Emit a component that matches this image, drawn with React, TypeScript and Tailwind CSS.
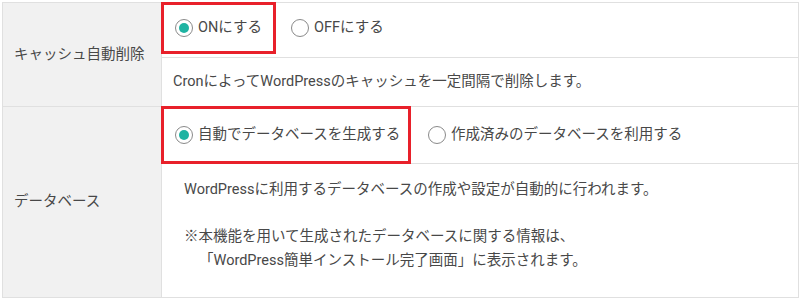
import type { ReactNode } from "react";

function Radio({ checked, label }: { checked?: boolean; label: string }) {
  return (
    <span className="flex items-center gap-[5px]">
      <span className="flex h-[18px] w-[18px] shrink-0 items-center justify-center rounded-full border-[1.5px] border-[#8a8a8a] bg-white">
        {checked && <span className="h-[10px] w-[10px] rounded-full bg-[#1fb3a2]" />}
      </span>
      <span className="whitespace-nowrap">{label}</span>
    </span>
  );
}

function Row({ label, last, children }: { label: string; last?: boolean; children: ReactNode }) {
  return (
    <div className={last ? "flex" : "flex border-b border-[#e0e0e0]"}>
      <div className="flex w-[159px] shrink-0 items-center border-r border-[#e0e0e0] bg-[#f1f1f1] pl-[11px]">
        {label}
      </div>
      <div className="flex flex-1 flex-col">{children}</div>
    </div>
  );
}

export default function App() {
  return (
    <div className="h-[301px] w-[800px] bg-white pl-[2px] pt-[2px] font-['Roboto','Noto_Sans_CJK_JP',sans-serif] text-[14.5px] text-[#484848]">
      <div className="w-[797px] border border-[#e0e0e0]">
        {/* キャッシュ自動削除 */}
        <Row label="キャッシュ自動削除">
          <div className="flex h-[55px] items-start border-b border-[#e0e0e0]">
            <div className="-ml-px -mt-px flex h-[52px] w-[115px] items-center border-[3px] border-[#e8202a] pl-[11px]">
              <Radio checked label="ONにする" />
            </div>
            <div className="-mt-px ml-[15px] flex h-[52px] items-center">
              <Radio label="OFFにする" />
            </div>
          </div>
          <div className="flex h-[48px] items-center pl-[11px]">
            CronによってWordPressのキャッシュを一定間隔で削除します。
          </div>
        </Row>

        {/* データベース */}
        <Row label="データベース" last>
          <div className="flex h-[57px] items-start border-b border-[#e0e0e0]">
            <div className="-ml-px -mt-px flex h-[58px] w-[250px] items-center border-[3px] border-[#e8202a] pl-[11px]">
              <Radio checked label="自動でデータベースを生成する" />
            </div>
            <div className="-mt-px ml-[17px] flex h-[58px] items-center">
              <Radio label="作成済みのデータベースを利用する" />
            </div>
          </div>
          <div className="h-[133px] pl-[22px] pt-[14px] leading-[23.5px]">
            <p>WordPressに利用するデータベースの作成や設定が自動的に行われます。</p>
            <p className="mt-[23.5px]">※本機能を用いて生成されたデータベースに関する情報は、</p>
            <p className="pl-[15px]">「WordPress簡単インストール完了画面」に表示されます。</p>
          </div>
        </Row>
      </div>
    </div>
  );
}
